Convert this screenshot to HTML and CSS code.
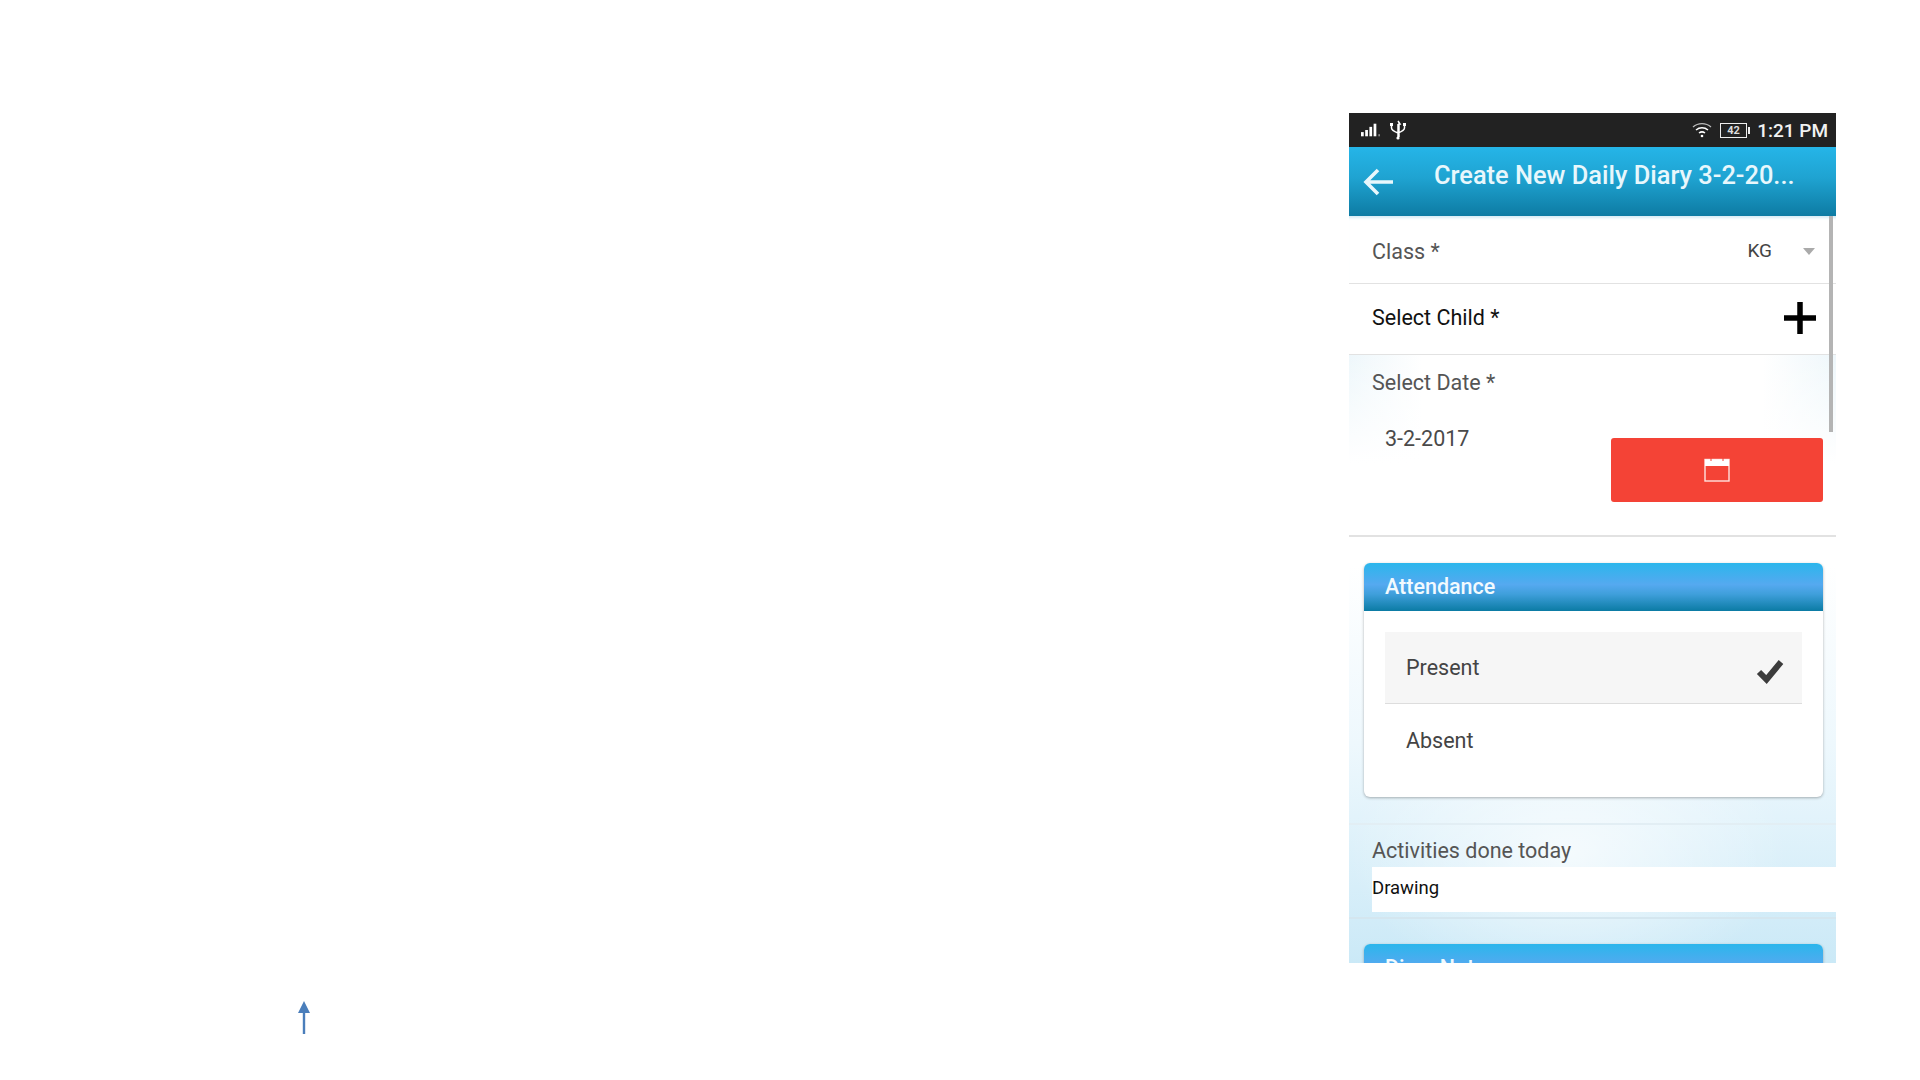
FILE: index.html
```html
<!DOCTYPE html>
<html lang="en">
<head>
    <meta charset="UTF-8">
    <title>Create New Daily Diary</title>
    <link rel="stylesheet" href="styles.css">
</head>
<body>
    <div class="slide">
        <svg class="slide-arrow" width="14" height="36" viewBox="0 0 14 36">
            <path d="M7 1 L13 13 L8.2 13 L8.2 34 L5.8 34 L5.8 13 L1 13 Z" fill="#4a7ebb"/>
        </svg>

        <div class="phone">
            <div class="status-bar">
                <div class="status-left">
                    <svg width="21" height="16" viewBox="0 0 20 14">
                        <rect x="0" y="9" width="2.6" height="4" fill="#fff"/>
                        <rect x="4" y="7" width="2.6" height="6" fill="#fff"/>
                        <rect x="8" y="4" width="2.6" height="9" fill="#fff"/>
                        <rect x="12" y="1" width="2.6" height="12" fill="#fff"/>
                        <rect x="16.5" y="11" width="1.6" height="2" fill="#888"/>
                    </svg>
                    <svg width="18" height="20" viewBox="0 0 18 20">
                        <path d="M9 1 L11 4 L10 4 L10 17 M9 4 L9 18 M2.5 5 L2.5 8 C2.5 10 4 11 9 13 C14 11 15.5 9 15.5 8 L15.5 5" fill="none" stroke="#fff" stroke-width="1.5"/>
                        <circle cx="9" cy="18" r="1.6" fill="#fff"/>
                        <rect x="1" y="3" width="3" height="3" fill="#fff"/>
                        <rect x="14" y="3" width="3" height="3" fill="#fff"/>
                    </svg>
                </div>
                <div class="status-right">
                    <svg width="20" height="16" viewBox="0 0 20 16">
                        <path d="M1 5 C6 0.5 14 0.5 19 5" fill="none" stroke="#bbb" stroke-width="1.3"/>
                        <path d="M4 8 C7.5 5 12.5 5 16 8" fill="none" stroke="#fff" stroke-width="1.5"/>
                        <path d="M7 11 C9 9.5 11 9.5 13 11" fill="none" stroke="#fff" stroke-width="1.5"/>
                        <circle cx="10" cy="14" r="1.3" fill="#fff"/>
                    </svg>
                    <div class="battery"><span class="battery-num">42</span></div>
                    <span class="clock">1:21 PM</span>
                </div>
            </div>

            <div class="app-header">
                <svg class="back-icon" width="32" height="30" viewBox="0 0 32 30">
                    <path d="M30 15 L3 15 M15 3 L3 15 L15 27" fill="none" stroke="#e8f7fc" stroke-width="3.6"/>
                </svg>
                <h1>Create New Daily Diary 3-2-20...</h1>
            </div>

            <div class="content">
                <div class="scroll-thumb"></div>

                <div class="row class-row">
                    <span class="label">Class *</span>
                    <div class="picker">
                        <span>KG</span>
                        <i class="caret"></i>
                    </div>
                </div>

                <div class="row child-row">
                    <span class="label label-dark">Select Child *</span>
                    <svg width="34" height="34" viewBox="0 0 34 34">
                        <path d="M1 17 L33 17 M17 1 L17 33" stroke="#000" stroke-width="5.5"/>
                    </svg>
                </div>

                <div class="date-block">
                    <div class="label">Select Date *</div>
                    <div class="date-line">
                        <span class="date-value">3-2-2017</span>
                        <button class="date-btn" type="button">
                            <svg width="26" height="24" viewBox="0 0 26 24">
                                <rect x="1" y="1.5" width="24" height="21.5" fill="none" stroke="#ffe3df" stroke-width="1.4"/>
                                <rect x="1" y="1.5" width="24" height="6.5" fill="#fff"/>
                                <path d="M7 0 L7 3 M19 0 L19 3" stroke="#f44336" stroke-width="1"/>
                            </svg>
                        </button>
                    </div>
                </div>

                <div class="card">
                    <div class="card-head">Attendance</div>
                    <div class="card-body">
                        <div class="option option-on">
                            <span>Present</span>
                            <svg class="check" width="28" height="26" viewBox="0 0 28 26">
                                <path d="M3 13 L10.5 20.5 L25 3" fill="none" stroke="#3c3c3c" stroke-width="6"/>
                            </svg>
                        </div>
                        <div class="option"><span>Absent</span></div>
                    </div>
                </div>

                <div class="activities">
                    <div class="label">Activities done today</div>
                    <div class="activity-input">Drawing</div>
                </div>

                <div class="card">
                    <div class="card-head">Diary Notes</div>
                </div>
            </div>
        </div>
    </div>
</body>
</html>
```

FILE: styles.css
```css
body {
    margin: 0;
    background-color: #fff;
    font-family: Roboto, "Liberation Sans", sans-serif;
}
.slide {
    position: relative;
    height: 1080px;
    padding: 113px 0 0 1349px;
    box-sizing: border-box;
    overflow: hidden;
}
.slide-arrow {
    position: absolute;
    left: 297px;
    top: 1000px;
}
.phone {
    width: 487px;
    height: 850px;
    overflow: hidden;
    display: flex;
    flex-direction: column;
}
.status-bar {
    height: 34px;
    flex: none;
    background-color: #222;
    display: flex;
    justify-content: space-between;
    align-items: center;
    padding: 0 8px 0 12px;
}
.status-left, .status-right {
    display: flex;
    align-items: center;
}
.status-left {
    gap: 7px;
}
.status-right svg {
    margin-right: 8px;
}
.battery {
    width: 25px;
    height: 13px;
    border: 1px solid #eee;
    margin-right: 10px;
    display: flex;
    align-items: center;
    justify-content: center;
    position: relative;
}
.battery::after {
    content: "";
    position: absolute;
    right: -4px;
    top: 3px;
    width: 2px;
    height: 7px;
    background-color: #eee;
}
.battery-num {
    color: #ddd;
    font-size: 11px;
    font-weight: 700;
}
.clock {
    color: #f2f2f2;
    font-size: 19px;
    font-weight: 500;
}
.app-header {
    height: 69px;
    flex: none;
    background: linear-gradient(to bottom, #25b5e8 0%, #1fa3d1 45%, #0d7ba3 100%);
    display: flex;
    align-items: flex-start;
}
.back-icon {
    margin: 20px 0 0 14px;
}
.app-header h1 {
    margin: 12px 0 0 39px;
    color: #e8f7fc;
    font-size: 25.4px;
    font-weight: 500;
    line-height: 32px;
    white-space: nowrap;
}
.content {
    position: relative;
    flex: 1;
    background:
        radial-gradient(ellipse 45% 18% at 45% 82%, rgba(255,255,255,0.7), rgba(255,255,255,0)),
        linear-gradient(to bottom, #fff 0%, #fff 45%, #eef8fd 68%, #c6e7f6 100%);
}
.scroll-thumb {
    position: absolute;
    right: 3px;
    top: 0;
    width: 4px;
    height: 216px;
    background-color: #b4b4b4;
}
.row {
    display: flex;
    justify-content: space-between;
    align-items: center;
    padding: 0 19px 0 23px;
    background-color: #fff;
    border-bottom: 1px solid #e2e2e2;
}
.class-row {
    height: 64px;
    padding-top: 3px;
    box-shadow: inset 0 4px 3px -2px #d4ebf5;
}
.child-row {
    height: 68px;
    padding-bottom: 2px;
}
.child-row .label {
    margin-top: -2px;
}
.label {
    color: #555;
    font-size: 21.5px;
}
.label-dark {
    color: #111;
}
.picker {
    display: flex;
    align-items: center;
    gap: 31px;
    margin-top: -2px;
    color: #444;
    font-size: 19px;
}
.caret {
    width: 0;
    height: 0;
    border-left: 6px solid transparent;
    border-right: 6px solid transparent;
    border-top: 7px solid #aaa;
    margin-top: 3px;
    margin-right: 2px;
}
.date-block {
    height: 182px;
    box-sizing: border-box;
    padding: 15px 13px 0 23px;
    border-bottom: 2px solid #e2e2e2;
    background:
        linear-gradient(to bottom, rgba(255,255,255,0), #fff 60%),
        linear-gradient(to right, #eef7fb, #fff 15%, #fff 85%, #eef7fb);
}
.date-line {
    display: flex;
    justify-content: space-between;
    align-items: flex-start;
    margin-top: 8px;
}
.date-value {
    margin: 23px 0 0 13px;
    color: #4a4a4a;
    font-size: 21.5px;
}
.date-btn {
    width: 212px;
    height: 64px;
    margin-top: 35px;
    border: none;
    border-radius: 3px;
    background-color: #f44336;
    display: flex;
    align-items: center;
    justify-content: center;
    padding: 0;
}
.card {
    margin: 26px 13px 0 15px;
    background-color: #fff;
    border-radius: 6px;
    box-shadow: 0 1px 3px rgba(0,0,0,0.3);
}
.card-head {
    height: 48px;
    line-height: 47px;
    padding-left: 21px;
    border-radius: 6px 6px 0 0;
    background: linear-gradient(to bottom, #2bb6ec 0%, #55a9f0 45%, #3f9fdb 65%, #0b7ba4 100%);
    color: #f2fafe;
    font-size: 21.5px;
    font-weight: 500;
}
.card-body {
    height: 186px;
    box-sizing: border-box;
    padding: 21px 21px 0;
}
.option {
    height: 72px;
    padding: 0 18px 0 21px;
    display: flex;
    justify-content: space-between;
    align-items: center;
    color: #444;
    font-size: 21.5px;
}
.option-on {
    background-color: #f6f6f6;
    border-bottom: 1px solid #ddd;
    box-sizing: border-box;
}
.check {
    margin-top: 9px;
}
.activities {
    height: 96px;
    margin-top: 26px;
    margin-bottom: -1px;
    box-sizing: border-box;
    padding: 0 0 0 23px;
    border-top: 2px solid #e2eef4;
    border-bottom: 2px solid #d4e6ef;
}
.activities .label {
    height: 42px;
    line-height: 52px;
}
.activity-input {
    height: 45px;
    line-height: 42px;
    background-color: #fff;
    color: #111;
    font-size: 18.5px;
}
```
